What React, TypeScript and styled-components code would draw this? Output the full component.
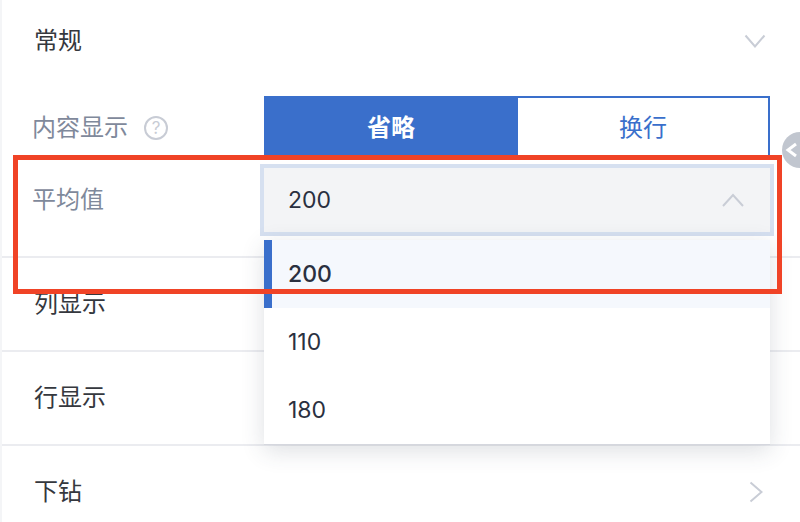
import React from 'react';
import styled, { createGlobalStyle } from 'styled-components';

const GlobalStyle = createGlobalStyle`
  html, body {
    margin: 0;
    padding: 0;
    background: #fff;
  }
  * {
    box-sizing: border-box;
  }
`;

const Page = styled.div`
  position: relative;
  width: 800px;
  height: 522px;
  overflow: hidden;
  background: #fff;
  font-family: Inter, "Noto Sans CJK SC", sans-serif;
`;

const Panel = styled.div`
  display: flex;
  flex-direction: column;
  border-left: 2px solid #f4f5f7;
`;

const SectionHeader = styled.div`
  display: flex;
  align-items: center;
  justify-content: space-between;
  height: 82px;
  padding: 0 34px 0 32px;
`;

const SectionTitle = styled.span`
  font-size: 24px;
  line-height: 32px;
  color: #35383e;
`;

const GeneralBody = styled.div`
  display: flex;
  flex-direction: column;
  gap: 8px;
  padding: 14px 30px 24px 30px;
`;

const FormRow = styled.div`
  display: flex;
  align-items: center;
  height: 64px;
`;

const FormLabel = styled.div`
  display: flex;
  align-items: center;
  gap: 16px;
  width: 232px;
  font-size: 24px;
  line-height: 32px;
  color: #7f899b;
`;

const HelpIcon = styled.span`
  display: flex;
  align-items: center;
  justify-content: center;
  width: 24px;
  height: 24px;
  border: 2px solid #c8ccd5;
  border-radius: 50%;
  font-size: 17px;
  line-height: 1;
  color: #c8ccd5;
`;

const Segmented = styled.div`
  display: grid;
  grid-template-columns: 254px 252px;
  height: 64px;
`;

const SegmentButton = styled.div<{ $active?: boolean }>`
  display: flex;
  align-items: center;
  justify-content: center;
  padding-bottom: 6px;
  font-size: 24px;
  font-weight: ${(p) => (p.$active ? 600 : 400)};
  color: ${(p) => (p.$active ? '#fff' : '#3a6fcb')};
  background: ${(p) => (p.$active ? '#3a6fcb' : '#fff')};
  border: 2px solid #3a6fcb;
  border-left-width: ${(p) => (p.$active ? 2 : 0)}px;
`;

const SelectBox = styled.div`
  position: relative;
  display: flex;
  align-items: center;
  justify-content: space-between;
  width: 506px;
  height: 64px;
  padding: 0 26px 0 24px;
  background: #f3f4f6;
  box-shadow: 0 0 0 4px #d6e0f0;
`;

const SelectValue = styled.span`
  font-size: 23px;
  color: #2a3040;
`;

const Dropdown = styled.div`
  position: absolute;
  top: 72px;
  left: 0;
  width: 506px;
  background: #fff;
  border-bottom: 1px solid #d5d7de;
  box-shadow: 0 6px 22px rgba(50, 60, 80, 0.16);
  z-index: 2;
`;

const Option = styled.div<{ $active?: boolean }>`
  display: flex;
  align-items: center;
  height: 68px;
  padding-left: 16px;
  font-size: 23px;
  font-weight: ${(p) => (p.$active ? 500 : 400)};
  color: #2a3040;
  background: ${(p) => (p.$active ? '#f5f8fd' : '#fff')};
  border-left: 8px solid ${(p) => (p.$active ? '#3a6fcb' : 'transparent')};
`;

const SectionRow = styled.div`
  display: flex;
  align-items: center;
  justify-content: space-between;
  flex: none;
  height: 94px;
  padding: 0 37px 0 32px;
  border-top: 2px solid #ebecf0;
`;

const Chevron = styled.svg`
  display: block;
  flex: none;
  fill: none;
  stroke: #c9cdd6;
  stroke-width: 2;
`;

const CollapseHandle = styled.div`
  position: absolute;
  top: 132px;
  left: 782px;
  display: flex;
  align-items: center;
  width: 36px;
  height: 36px;
  padding-left: 3px;
  border-radius: 50%;
  background: #c1c6cf;
`;

const Annotation = styled.div`
  position: absolute;
  top: 155px;
  left: 13px;
  width: 769px;
  height: 139px;
  border: 5px solid #f04326;
  pointer-events: none;
  z-index: 3;
`;

const options = ['200', '110', '180'];

const App: React.FC = () => {
  return (
    <Page>
      <GlobalStyle />
      <Panel>
        <SectionHeader>
          <SectionTitle>常规</SectionTitle>
          <Chevron width="22" height="14" viewBox="0 0 22 14">
            <path d="M1.5 1.5 L11 12.5 L20.5 1.5" />
          </Chevron>
        </SectionHeader>
        <GeneralBody>
          <FormRow>
            <FormLabel>
              内容显示
              <HelpIcon>?</HelpIcon>
            </FormLabel>
            <Segmented>
              <SegmentButton $active>省略</SegmentButton>
              <SegmentButton>换行</SegmentButton>
            </Segmented>
          </FormRow>
          <FormRow>
            <FormLabel>平均值</FormLabel>
            <SelectBox>
              <SelectValue>200</SelectValue>
              <Chevron width="22" height="14" viewBox="0 0 22 14">
                <path d="M1 13 L11 2 L21 13" />
              </Chevron>
              <Dropdown>
                {options.map((opt, i) => (
                  <Option key={opt} $active={i === 0}>
                    {opt}
                  </Option>
                ))}
              </Dropdown>
            </SelectBox>
          </FormRow>
        </GeneralBody>
        <SectionRow>
          <SectionTitle>列显示</SectionTitle>
        </SectionRow>
        <SectionRow>
          <SectionTitle>行显示</SectionTitle>
        </SectionRow>
        <SectionRow>
          <SectionTitle>下钻</SectionTitle>
          <Chevron width="14" height="22" viewBox="0 0 14 22">
            <path d="M1.5 1.5 L12.5 11 L1.5 20.5" />
          </Chevron>
        </SectionRow>
      </Panel>
      <CollapseHandle>
        <svg width="14" height="16" viewBox="0 0 14 16" fill="none" stroke="#fff" strokeWidth="3">
          <path d="M11 2 L3 8 L11 14" />
        </svg>
      </CollapseHandle>
      <Annotation />
    </Page>
  );
};

export default App;
